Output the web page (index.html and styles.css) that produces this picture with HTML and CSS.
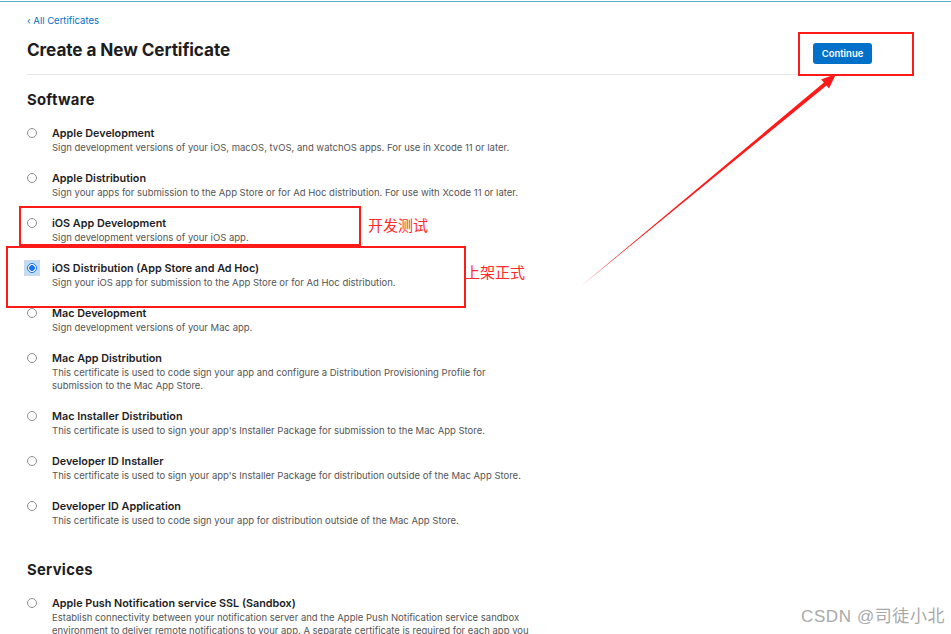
FILE: index.html
```html
<!DOCTYPE html>
<html lang="en">
<head>
<meta charset="utf-8">
<title>Create a New Certificate</title>
<link rel="stylesheet" href="styles.css">
</head>
<body>
<div class="topline"></div>
<div class="page">
  <a class="back" href="#">‹ All Certificates</a>
  <div class="header">
    <h1 class="title">Create a New Certificate</h1>
    <button class="continue">Continue</button>
  </div>

  <h2 class="section">Software</h2>
  <ul class="options">
    <li class="option"><span class="radio"></span><div class="text"><div class="name">Apple Development</div><div class="desc">Sign development versions of your iOS, macOS, tvOS, and watchOS apps. For use in Xcode 11 or later.</div></div></li>
    <li class="option"><span class="radio"></span><div class="text"><div class="name">Apple Distribution</div><div class="desc">Sign your apps for submission to the App Store or for Ad Hoc distribution. For use with Xcode 11 or later.</div></div></li>
    <li class="option"><span class="radio"></span><div class="text"><div class="name">iOS App Development</div><div class="desc">Sign development versions of your iOS app.</div></div></li>
    <li class="option"><span class="radio checked"></span><div class="text"><div class="name">iOS Distribution (App Store and Ad Hoc)</div><div class="desc">Sign your iOS app for submission to the App Store or for Ad Hoc distribution.</div></div></li>
    <li class="option"><span class="radio"></span><div class="text"><div class="name">Mac Development</div><div class="desc">Sign development versions of your Mac app.</div></div></li>
    <li class="option"><span class="radio"></span><div class="text"><div class="name">Mac App Distribution</div><div class="desc">This certificate is used to code sign your app and configure a Distribution Provisioning Profile for submission to the Mac App Store.</div></div></li>
    <li class="option"><span class="radio"></span><div class="text"><div class="name">Mac Installer Distribution</div><div class="desc">This certificate is used to sign your app's Installer Package for submission to the Mac App Store.</div></div></li>
    <li class="option"><span class="radio"></span><div class="text"><div class="name">Developer ID Installer</div><div class="desc">This certificate is used to sign your app's Installer Package for distribution outside of the Mac App Store.</div></div></li>
    <li class="option"><span class="radio"></span><div class="text"><div class="name">Developer ID Application</div><div class="desc">This certificate is used to code sign your app for distribution outside of the Mac App Store.</div></div></li>
  </ul>

  <h2 class="section services">Services</h2>
  <ul class="options">
    <li class="option"><span class="radio"></span><div class="text"><div class="name">Apple Push Notification service SSL (Sandbox)</div><div class="desc">Establish connectivity between your notification server and the Apple Push Notification service sandbox environment to deliver remote notifications to your app. A separate certificate is required for each app you develop.</div></div></li>
  </ul>
</div>

<div class="mark mark-continue"></div>
<div class="mark mark-dev"></div>
<div class="mark mark-dist"></div>
<div class="note note-dev">开发测试</div>
<div class="note note-dist">上架正式</div>
<svg class="arrow" width="951" height="634" viewBox="0 0 951 634" xmlns="http://www.w3.org/2000/svg">
  <polygon points="580,287 826.5,85.4 829,88.5 836,74 821,79.5 823.9,82.4" fill="#ff1a1a"/>
</svg>
<div class="watermark">CSDN @司徒小北</div>
</body>
</html>
```

FILE: styles.css
```css
html, body {
  margin: 0;
  padding: 0;
  background: #ffffff;
  height: 634px;
  overflow: hidden;
}
body {
  position: relative;
  font-family: "Inter", "Liberation Sans", "Noto Sans CJK SC", sans-serif;
  color: #1d1d1f;
}
.topline {
  height: 1px;
  margin-top: 1px;
  background: #5aaec9;
}
.page {
  padding: 12px 39px 0 27px;
}
.back {
  display: block;
  font-size: 9.5px;
  line-height: 14px;
  color: #0070c9;
  text-decoration: none;
}
.header {
  display: flex;
  justify-content: space-between;
  align-items: flex-start;
  margin-top: 10px;
  padding: 0 40px 10px 0;
  border-bottom: 1px solid #e6e6e6;
}
.title {
  margin: 0;
  font-size: 17.2px;
  line-height: 24px;
  font-weight: 700;
  letter-spacing: -0.1px;
}
.continue {
  margin-top: 5px;
  width: 59px;
  height: 21px;
  border: 0;
  border-radius: 3px;
  background: #0070c9;
  color: #ffffff;
  font-family: inherit;
  font-size: 9.5px;
  font-weight: 600;
  padding: 0;
}
.section {
  margin: 15px 0 0 0;
  font-size: 14.8px;
  line-height: 20px;
  font-weight: 700;
  letter-spacing: 0.3px;
}
.section.services {
  margin-top: 33px;
}
.options {
  list-style: none;
  margin: 17px 0 0 0;
  padding: 0;
}
.option {
  display: flex;
  gap: 15px;
  margin-bottom: 18px;
}
.radio {
  flex: none;
  box-sizing: border-box;
  width: 10px;
  height: 10px;
  margin-top: 1px;
  border: 1px solid #8e8e8e;
  border-radius: 50%;
  background: #fff;
  position: relative;
}
.radio.checked {
  border: 0;
  background: transparent;
  z-index: 0;
}
.radio.checked::before {
  content: "";
  position: absolute;
  left: -3px;
  top: -3px;
  width: 16px;
  height: 16px;
  background: #c4dbf6;
  z-index: -1;
}
.radio.checked::after {
  content: "";
  position: absolute;
  left: 0;
  top: 0;
  box-sizing: border-box;
  width: 10px;
  height: 10px;
  border: 1px solid #1a73e8;
  border-radius: 50%;
  background: radial-gradient(circle, #1a73e8 0, #1a73e8 2.6px, #ffffff 3.1px);
}
.text {
  max-width: 480px;
}
.name {
  font-size: 10.8px;
  line-height: 14px;
  font-weight: 600;
  color: #1d1d1f;
}
.desc {
  font-size: 9.5px;
  line-height: 13px;
  color: #555;
}
.mark {
  position: absolute;
  border: 2px solid #ff1a1a;
  box-sizing: border-box;
}
.mark-continue { left: 798px; top: 32px; width: 116px; height: 44px; }
.mark-dev { left: 19px; top: 206px; width: 342px; height: 40px; }
.mark-dist { left: 6px; top: 246px; width: 460px; height: 62px; }
.note {
  position: absolute;
  font-family: "Noto Sans CJK SC", sans-serif;
  font-size: 15px;
  line-height: 20px;
  color: #ff2a2a;
}
.note-dev { left: 368px; top: 215px; }
.note-dist { left: 465px; top: 262px; }
.arrow {
  position: absolute;
  left: 0;
  top: 0;
  pointer-events: none;
}
.watermark {
  position: absolute;
  left: 801px;
  top: 606px;
  font-family: "Liberation Sans", "Noto Sans CJK SC", sans-serif;
  font-size: 17px;
  line-height: 22px;
  letter-spacing: 0.6px;
  color: #a9a9a9;
  text-shadow: 0 0 2px #fff;
}
```
